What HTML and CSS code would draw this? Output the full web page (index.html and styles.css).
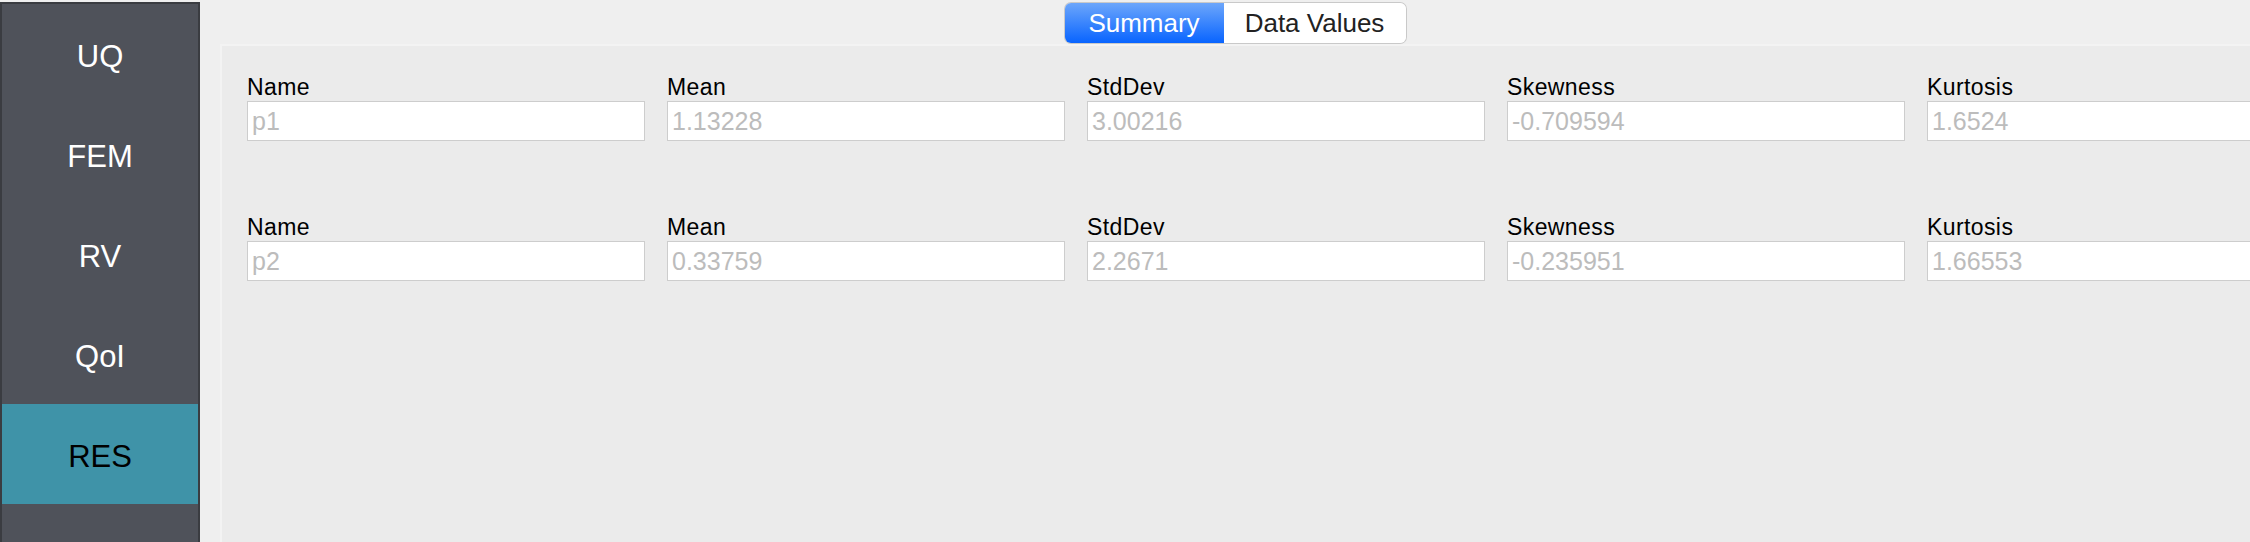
FILE: index.html
```html
<!DOCTYPE html>
<html>
<head>
<meta charset="utf-8">
<link rel="stylesheet" href="styles.css">
</head>
<body>
<div class="app">
  <nav class="sidebar">
    <div class="nav-item">UQ</div>
    <div class="nav-item">FEM</div>
    <div class="nav-item">RV</div>
    <div class="nav-item">QoI</div>
    <div class="nav-item active">RES</div>
  </nav>
  <main class="main">
    <header class="header">
      <div class="segmented">
        <div class="seg seg-on">Summary</div>
        <div class="seg seg-off">Data Values</div>
      </div>
    </header>
    <section class="panel">
      <div class="row">
        <div class="col"><div class="label">Name</div><div class="field">p1</div></div>
        <div class="col"><div class="label">Mean</div><div class="field">1.13228</div></div>
        <div class="col"><div class="label">StdDev</div><div class="field">3.00216</div></div>
        <div class="col"><div class="label">Skewness</div><div class="field">-0.709594</div></div>
        <div class="col"><div class="label">Kurtosis</div><div class="field">1.6524</div></div>
      </div>
      <div class="row">
        <div class="col"><div class="label">Name</div><div class="field">p2</div></div>
        <div class="col"><div class="label">Mean</div><div class="field">0.33759</div></div>
        <div class="col"><div class="label">StdDev</div><div class="field">2.2671</div></div>
        <div class="col"><div class="label">Skewness</div><div class="field">-0.235951</div></div>
        <div class="col"><div class="label">Kurtosis</div><div class="field">1.66553</div></div>
      </div>
    </section>
  </main>
</div>
</body>
</html>
```
FILE: styles.css
```css
html, body {
  margin: 0;
  padding: 0;
  width: 2250px;
  height: 542px;
  overflow: hidden;
  background: #efefef;
  font-family: "Liberation Sans", Arial, sans-serif;
}

.app {
  display: flex;
  width: 2250px;
  height: 542px;
}

.sidebar {
  flex: 0 0 196px;
  margin-top: 2px;
  background: #4f525a;
  border: 2px solid #3a3c41;
  border-bottom: none;
  display: flex;
  flex-direction: column;
}

.nav-item {
  height: 100px;
  box-sizing: border-box;
  padding-top: 6px;
  display: flex;
  align-items: center;
  justify-content: center;
  color: #ffffff;
  font-size: 31px;
}

.nav-item.active {
  background: #3f93a8;
  color: #000000;
}

.main {
  flex: 1;
  min-width: 0;
  margin-left: 20px;
  display: flex;
  flex-direction: column;
  overflow: hidden;
}

.header {
  height: 44px;
  display: flex;
  justify-content: center;
  align-items: flex-start;
  padding-top: 3px;
  box-sizing: border-box;
}

.segmented {
  display: flex;
  height: 40px;
  border-radius: 6px;
  box-shadow: 0 0 0 1px #c9c9c9;
  overflow: hidden;
}

.seg {
  display: flex;
  align-items: center;
  justify-content: center;
  font-size: 26px;
}

.seg-on {
  width: 159px;
  background: linear-gradient(to bottom, #6ca6fb, #0864ff);
  color: #ffffff;
}

.seg-off {
  width: 182px;
  background: #ffffff;
  color: #222222;
}

.panel {
  flex: 1;
  background: #ebebeb;
  border-top: 2px solid #f3f3f3;
  border-left: 2px solid #f3f3f3;
  padding: 28px 0 0 25px;
  display: flex;
  flex-direction: column;
  gap: 73px;
}

.row {
  display: flex;
  gap: 22px;
}

.col {
  flex: 0 0 398px;
  display: flex;
  flex-direction: column;
}

.label {
  font-size: 23px;
  letter-spacing: 0.4px;
  line-height: 26px;
  color: #000000;
  margin-bottom: 1px;
}

.field {
  height: 38px;
  background: #ffffff;
  border: 1px solid #cdcdcd;
  color: #bcbcbc;
  font-size: 25px;
  line-height: 38px;
  padding-left: 4px;
}
```
